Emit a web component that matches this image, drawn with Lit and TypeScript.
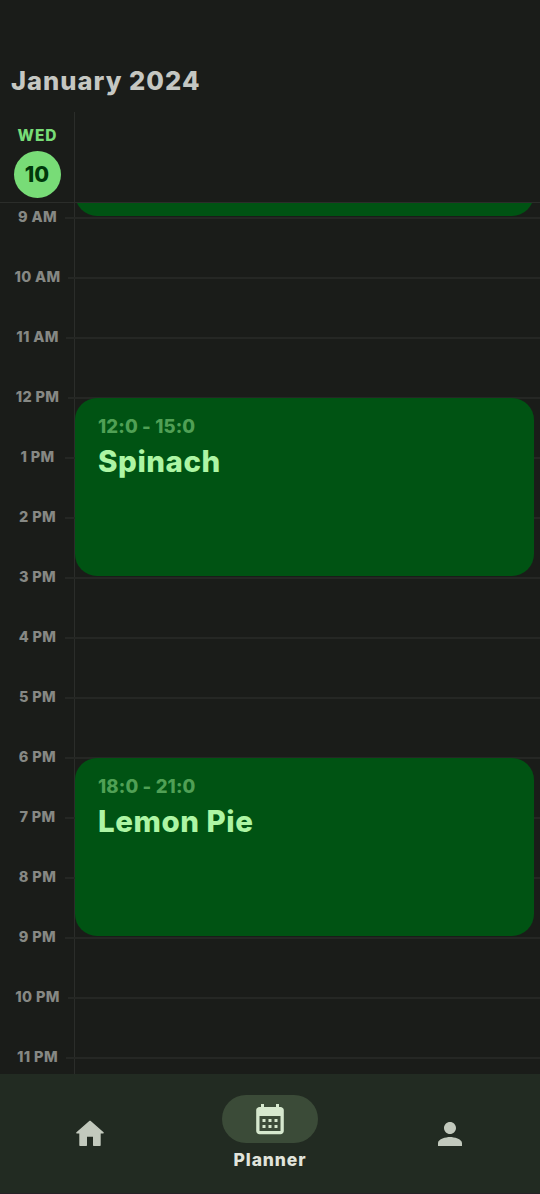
import { LitElement, html, css } from "lit";
import { customElement, property } from "lit/decorators.js";
import { classMap } from "lit/directives/class-map.js";

const HOURS = ["9 AM", "10 AM", "11 AM", "12 PM", "1 PM", "2 PM", "3 PM", "4 PM", "5 PM", "6 PM", "7 PM", "8 PM", "9 PM", "10 PM", "11 PM"];
const EVENTS: Record<string, { time: string; title: string }> = {
  "12 PM": { time: "12:0 - 15:0", title: "Spinach" },
  "6 PM": { time: "18:0 - 21:0", title: "Lemon Pie" },
};

@customElement("planner-event")
class PlannerEvent extends LitElement {
  @property() time = "";
  @property() heading = "";
  static styles = css`
    :host { display: block; box-sizing: border-box; background: #005313; border-radius: 22px; height: 178px; padding: 16px 23px; }
    .time { font-size: 18.500px; line-height: 24px; font-weight: 800; color: #50a055; letter-spacing: 0.15px; }
    .heading { font-size: 29.500px; line-height: 36px; font-weight: 800; color: #adf5a4; margin-top: 5px; letter-spacing: 0.55px; }
    .time, .heading { white-space: nowrap; }
  `;
  render() {
    return html`<div class="time">${this.time}</div>
      <div class="heading">${this.heading}</div>`;
  }
}

@customElement("nav-bar")
class NavBar extends LitElement {
  static styles = css`
    :host { display: grid; grid-template-columns: repeat(3, 1fr); height: 120px; background: #222b22; border-bottom: 1px solid #252126; box-sizing: border-box; }
    .item { display: flex; flex-direction: column; align-items: center; }
    .plain { padding-top: 42px; }
    .pill { margin-top: 21px; width: 96px; height: 48px; border-radius: 24px; background: #3b4b38; display: flex; align-items: center; justify-content: center; }
    svg { display: block; width: 36px; height: 36px; fill: #c2c9bd; }
    .pill svg { fill: #d6e8ce; }
    .home { stroke: #c2c9bd; stroke-width: 1.4; stroke-linejoin: round; }
    .label { font-size: 17.500px; line-height: 24px; margin-top: 5px; font-weight: 800; color: #e1e4dc; letter-spacing: 0.9px; }
  `;
  render() {
    return html`
      <div class="item plain"><svg viewBox="0 0 36 36"><path class="home" d="M18 5.400 4.900 16.700H8v12.600h6.300v-9.200h7.400v9.200H28V16.700h3.100z" /></svg></div>
      <div class="item">
        <div class="pill"><svg viewBox="0 0 24 24"><path fill-rule="evenodd" d="M19 4h-1V2h-2v2H8V2H6v2H5c-1.100 0-2.200.9-2.200 2v14c0 1.200 1 2.100 2.200 2.100h14c1.200 0 2.200-.9 2.200-2.100V6c0-1.100-1.100-2-2.200-2zm0 16H5V10h14v10zM9 14H7v-2h2v2zm4 0h-2v-2h2v2zm4 0h-2v-2h2v2zm-8 4H7v-2h2v2zm4 0h-2v-2h2v2zm4 0h-2v-2h2v2z" /></svg></div>
        <div class="label">Planner</div>
      </div>
      <div class="item plain"><svg viewBox="0 0 24 24"><path d="M12 12c2.210 0 4-1.790 4-4s-1.790-4-4-4-4 1.790-4 4 1.790 4 4 4zm0 2c-2.670 0-8 1.340-8 4v2h16v-2c0-2.660-5.330-4-8-4z" /></svg></div>`;
  }
}

@customElement("app-root")
class AppRoot extends LitElement {
  static styles = css`
    :host { display: flex; flex-direction: column; width: 540px; height: 1194px; overflow: hidden; background: #1a1c19; font-family: Inter, "Open Sans", sans-serif; }
    .title { height: 112px; flex: none; box-sizing: border-box; padding: 64px 0 0 11px; font-size: 25.500px; line-height: 34px; font-weight: 800; color: #c5c7c2; white-space: nowrap; letter-spacing: 1.020px; }
    .head { height: 91px; flex: none; box-sizing: border-box; border-bottom: 1px solid #2b2d2a; display: flex; }
    .day { width: 75px; box-sizing: border-box; border-right: 1px solid #2b2d2a; display: flex; flex-direction: column; align-items: center; padding-top: 14px; }
    .dow { font-size: 15.500px; line-height: 20px; font-weight: 800; color: #78dc77; letter-spacing: 0.9px; padding-left: 1px; }
    .num { width: 47px; height: 47px; box-sizing: border-box; padding-bottom: 2px; border-radius: 50%; background: #78dc77; color: #00390a; display: flex; align-items: center; justify-content: center; font-size: 21.500px; font-weight: 800; margin-top: 5px; }
    .body { flex: 1; min-height: 0; overflow: hidden; display: grid; grid-template-columns: 75px 1fr; grid-template-rows: 15px repeat(15, 60px); }
    .rail { grid-column: 1; grid-row: 1 / -1; border-right: 1px solid #2b2d2a; }
    .prev { grid-column: 2; grid-row: 1; height: 178px; margin: -165px 6px 0 0; background: #005313; border-radius: 22px; }
    .line { grid-column: 1 / -1; height: 2px; background: #252724; margin-left: 65px; margin-top: -1px; align-self: start; }
    .line.wide { margin-left: 68px; }
    .line.eleven { margin-left: 66px; }
    .hour { grid-column: 1; margin-top: -11px; height: 20px; line-height: 20px; text-align: center; font-size: 14.500px; font-weight: 800; color: #868884; white-space: nowrap; letter-spacing: 0.35px; }
    planner-event { grid-column: 2; margin-right: 6px; align-self: start; z-index: 1; }
    nav-bar { flex: none; }
  `;
  render() {
    return html`
      <div class="title">January 2024</div>
      <div class="head"><div class="day"><div class="dow">WED</div><div class="num">10</div></div></div>
      <div class="body">
        <div class="rail"></div>
        <div class="prev"></div>
        ${HOURS.map((h, i) => {
          const row = `grid-row: ${i + 2}`;
          const e = EVENTS[h];
          return html`
            <div class=${classMap({ line: true, wide: /^1[02]/.test(h), eleven: /^11/.test(h) })} style=${row}></div>
            <div class="hour" style=${row}>${h}</div>
            ${e ? html`<planner-event style="grid-row: ${i + 2} / span 3" .time=${e.time} .heading=${e.title}></planner-event>` : ""}`;
        })}
      </div>
      <nav-bar></nav-bar>`;
  }
}
